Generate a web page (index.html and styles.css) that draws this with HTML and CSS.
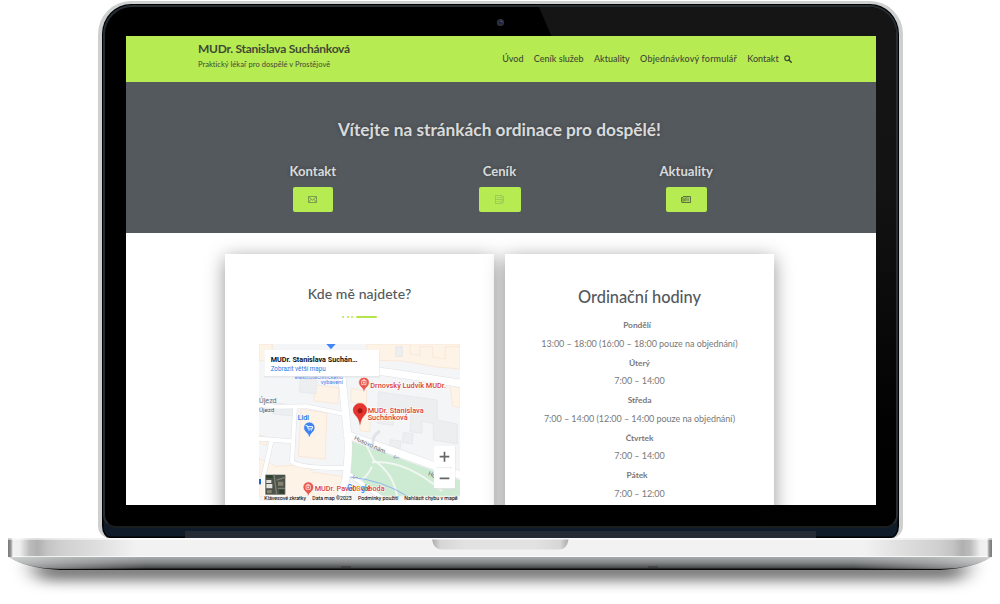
FILE: index.html
```html
<!DOCTYPE html>
<html lang="cs">
<head>
<meta charset="utf-8">
<title>MUDr. Stanislava Suchánková</title>
<link rel="stylesheet" href="styles.css">
</head>
<body>
<div class="laptop">
  <div class="lid">
    <div class="glass">
      <svg class="glare" width="795" height="523" viewBox="0 0 795 523">
        <defs><linearGradient id="gl" x1="0" y1="0" x2="0" y2="1"><stop offset="0" stop-color="#151515"/><stop offset=".35" stop-color="#131313"/><stop offset=".8" stop-color="#020202"/><stop offset="1" stop-color="#000"/></linearGradient></defs>
        <path d="M436 2H765Q793 2 793 30V522H660Z" fill="url(#gl)"/>
        <circle cx="397.500" cy="17.500" r="3.600" fill="#32333a"/><circle cx="397.500" cy="17.500" r="2" fill="#18234c"/><circle cx="398.300" cy="16.500" r=".8" fill="#5266a0"/>
      </svg>
      <div class="screen">
        <header class="header">
          <div class="brand">
            <div class="brand-name"><span class="t">MUDr. Stanislava Suchánková</span></div>
            <div class="brand-sub"><span class="t">Praktický lékař pro dospělé v Prostějově</span></div>
          </div>
          <nav class="nav">
            <a class="t">Úvod</a><a class="t">Ceník služeb</a><a class="t">Aktuality</a><a class="t wide">Objednávkový formulář</a><a class="t">Kontakt</a>
            <svg class="search" width="8" height="8" viewBox="0 0 8 8"><circle cx="3.200" cy="3.200" r="2.400" fill="none" stroke="#3f4a35" stroke-width="1.200"/><path d="M5 5l2.300 2.300" stroke="#3f4a35" stroke-width="1.500" stroke-linecap="round"/></svg>
          </nav>
        </header>
        <section class="hero">
          <h1><span class="t">Vítejte na stránkách ordinace pro dospělé!</span></h1>
          <div class="links">
            <div class="link"><h2><span class="t">Kontakt</span></h2>
              <a class="btn b1"><svg width="9" height="7" viewBox="0 0 9 7"><path d="M.5.5h8v6h-8zM.5.8l4 3.400 4-3.400M.5 6.300l2.700-3M8.500 6.300l-2.700-3" fill="none" stroke="#6d8d4a" stroke-width=".8"/></svg></a></div>
            <div class="link"><h2><span class="t">Ceník</span></h2>
              <a class="btn b2"><svg width="9" height="9" viewBox="0 0 9 9"><path d="M.5.500h6.500v8H.5zM7 1.500h1.500v5.500L7 8.500M1.800 2.500h1.500M4.300 2.500H6M.5 4.500H7M1.800 6.500h1.500M4.300 6.500H6" fill="none" stroke="#96c25a" stroke-width=".8"/></svg></a></div>
            <div class="link"><h2><span class="t">Aktuality</span></h2>
              <a class="btn b3"><svg width="10" height="7" viewBox="0 0 10 7"><path d="M2 .5h7.500v6H1Q.5 6.500.5 5.500v-4H2v4.500" fill="none" stroke="#506645" stroke-width=".9"/><path d="M3.200 2h5M3.200 3h2v1.800h-2zM6.200 3.300h2M6.200 4.800h2" fill="none" stroke="#506645" stroke-width=".7"/></svg></a></div>
          </div>
        </section>
        <main class="cards">
          <section class="card place">
            <h3><span class="t">Kde mě najdete?</span></h3>
            <div class="divider"><i></i><i></i><i></i><b></b></div>
            <svg class="map" width="201" height="157" viewBox="27 27 603 471">
              <rect x="27" y="27" width="603" height="471" fill="#f4f5f7"/>
              <g fill="#fef3e7" stroke="#f8e3d0" stroke-width="2">
                <path d="M350 27h280v75l-70-6-100-18-80-2-28-14z"/>
                <path d="M480 27v30l30 4V35h38v32l38 5V35h44"/>
                <path d="M153 222l78 12-6 138-80-8z"/>
                <path d="M303 160l48 7-2 40-46-6zM330 232l32 5-3 54-29-4z"/>
                <path d="M27 300l30 8-8 22-22-5zM27 370l52 24 90-6 20 24 90 12v60l-130 8-122-8z"/>
                <path d="M195 150l72 8-4 48-72-8zM27 27h40v50H27z"/>
                <path d="M600 150l30 8v60l-22-5z"/>
              </g>
              <g fill="#eceef0" stroke="#e3e5e8" stroke-width="2">
                <path d="M385 170l105 15 72 10v60l60 12v60l-72-12v-50l-34-6v36l-36-5 3-55-50-7-4 43-46-6z"/>
                <path d="M151 130l50 5-3 41-50-5zM72 202l58 9-4 32-58-6zM421 314l32 4-3 29-32-4zM460 292l30 5-3 30-30-5z"/>
                <path d="M437 35h20v30h-20z"/>
              </g>
              <path d="M297 316L630 436V488H400L300 415z" fill="#cdebd2"/>
              <g fill="none" stroke="#dde1e6" stroke-linecap="round" stroke-linejoin="round">
                <path d="M271 80L291 280Q300 335 288 430L270 498M291 299L630 420M330 101Q440 115 630 145" stroke-width="25"/>
                <path d="M27 210l55 5 90-1 115 24M135 216L126 380Q150 400 285 399M27 311l98 8M65 315L38 435M300 420l110 80" stroke-width="15"/>
                <path d="M371 342q-10-36 16-52" stroke-width="9"/>
              </g>
              <g fill="none" stroke="#fff" stroke-linecap="round" stroke-linejoin="round">
                <path d="M271 80L291 280Q300 335 288 430L270 498M291 299L630 420M330 101Q440 115 630 145" stroke-width="22"/>
                <path d="M27 210l55 5 90-1 115 24M135 216L126 380Q150 400 285 399M27 311l98 8M65 315L38 435M300 420l110 80" stroke-width="12"/>
                <path d="M371 342q-10-36 16-52" stroke="#e1e4e8" stroke-width="7"/>
              </g>
              <path d="M345 323l27 53q60 40 70 112M366 395q-14 30-34 40M366 382q100-8 210 86" fill="none" stroke="#eff7f0" stroke-width="6"/>
              <path d="M300 426q100 10 175 60" fill="none" stroke="#92b5ef" stroke-width="3"/>
              <path d="M448 369l-15-3m4-5l-6 5 5 6M324 428l-15-2m5-5l-6 5 5 6" fill="none" stroke="#9cabc2" stroke-width="3"/>
              <path d="M229 27h28l-14 16z" fill="#4285f4"/>
              <rect x="27" y="432" width="6" height="16" fill="#1a67d2"/>
              <g class="map-text">
                <text x="134" y="131" font-size="17" fill="#4a82e8" textLength="145" lengthAdjust="spacingAndGlyphs">elektrotechnického</text>
                <text x="212" y="147" font-size="18" fill="#4a82e8" textLength="67" lengthAdjust="spacingAndGlyphs">vybavení</text>
                <text x="27" y="203" font-size="20" fill="#66717c" textLength="53" lengthAdjust="spacingAndGlyphs">Újezd</text>
                <text x="27" y="232" font-size="17" fill="#50565c" textLength="46" lengthAdjust="spacingAndGlyphs">Újezd</text>
                <text x="143" y="256" font-size="22" fill="#2878ed" stroke="#2878ed" stroke-width=".6" textLength="34" lengthAdjust="spacingAndGlyphs">Lidl</text>
                <text transform="translate(311 313) rotate(25)" font-size="18" fill="#60656b" textLength="106" lengthAdjust="spacingAndGlyphs">Husovo nám.</text>
                <text transform="translate(533 420) rotate(23)" font-size="18" fill="#60656b">Husovo n</text>
                <g class="poi">
                  <text x="361" y="158" font-size="21" textLength="227" lengthAdjust="spacingAndGlyphs">Drnovský Ludvík MUDr.</text>
                  <text x="353" y="234" font-size="21" textLength="168" lengthAdjust="spacingAndGlyphs">MUDr. Stanislava</text>
                  <text x="353" y="256" font-size="21" textLength="120" lengthAdjust="spacingAndGlyphs">Suchánková</text>
                  <text x="194" y="469" font-size="22" textLength="210" lengthAdjust="spacingAndGlyphs">MUDr. Pavel Svoboda</text>
                </g>
              </g>
              <g stroke="#fff" stroke-width="2">
                <path d="M178 309q-3-13-11-18a17 17 0 1 1 22 0q-8 5-11 18z" fill="#3f83ee"/>
                <path d="M342 173q-3-13-10-18a16 16 0 1 1 20 0q-8 5-10 18z" fill="#e9574d"/>
                <path d="M175 486q-3-13-10-17a16 16 0 1 1 20 0q-8 5-10 17z" fill="#e9574d"/>
              </g>
              <path d="M168 272h4l3 10h11l2-7h-14M177 286h.1M185 286h.1" fill="none" stroke="#fff" stroke-width="3" stroke-linecap="round"/>
              <path d="M335 137h13v12h-13zM339 137v-3h5v3M341.500 140v6M338.500 143h6M168 451h13v12h-13zM172 451v-3h5v3M174.500 454v6M171.500 457h6" fill="none" stroke="#fff" stroke-width="2"/>
              <path d="M330 269q-2-17-14-29a20.500 20.500 0 1 1 28 0q-12 12-14 29z" fill="#e6352e" stroke="#c82b25"/><circle cx="330" cy="227" r="7.500" fill="#9f1714"/>
              <g class="google" font-size="28" font-weight="500"><text x="292" y="469" textLength="70" lengthAdjust="spacingAndGlyphs"><tspan fill="#4285f4">G</tspan><tspan fill="#ea4335">o</tspan><tspan fill="#fbbc05">o</tspan><tspan fill="#4285f4">g</tspan><tspan fill="#34a853">l</tspan><tspan fill="#ea4335">e</tspan></text></g>
              <rect x="43" y="46" width="346" height="81" fill="#c7cbd0" opacity=".6"/><rect x="43" y="45" width="345" height="79" fill="#fff"/>
              <g class="map-text">
                <text x="62" y="80" font-size="21" font-weight="700" fill="#111" textLength="260" lengthAdjust="spacingAndGlyphs">MUDr. Stanislava Suchán…</text>
                <text x="62" y="107" font-size="19" fill="#237ae5" textLength="165" lengthAdjust="spacingAndGlyphs">Zobrazit větší mapu</text>
              </g>
              <rect x="43" y="417" width="64" height="64" fill="#fff"/><rect x="46" y="419" width="60" height="60" fill="#4c5149"/>
              <path d="M72 419l8 60M80 435l26-8M83 460h22" stroke="#7b8073" stroke-width="4"/><path d="M49 435h15v9H49zM49 447h18v13H49z" fill="#e3e1dc"/><path d="M84 440h16v12H84zM51 465h14v10H51z" fill="#85836f"/><path d="M88 464h14v12H88zM50 421h18v8H50z" fill="#30402f"/>
              <rect x="552" y="334" width="64" height="129" rx="3" fill="#d8dbde"/><rect x="552" y="333" width="63" height="127" rx="3" fill="#fff"/>
              <path d="M560 398h47" stroke="#e6e6e6" stroke-width="2"/><path d="M569 365h29M583.500 350v30M569 430h29" stroke="#666" stroke-width="5"/>
              <rect x="38" y="482" width="592" height="16" fill="#f5f5f5" opacity=".75"/>
              <g class="map-text" font-size="15" fill="#151515" stroke="#151515" stroke-width=".2">
                <text x="43" y="494" textLength="125" lengthAdjust="spacingAndGlyphs">Klávesové zkratky</text>
                <text x="187" y="494" textLength="118" lengthAdjust="spacingAndGlyphs">Data map ©2023</text>
                <text x="324" y="494" textLength="121" lengthAdjust="spacingAndGlyphs">Podmínky použití</text>
                <text x="463" y="494" textLength="160" lengthAdjust="spacingAndGlyphs">Nahlásit chybu v mapě</text>
              </g>
            </svg>
          </section>
          <section class="card hours">
            <h3><span class="t">Ordinační hodiny</span></h3>
            <p class="day shift"><span class="t">Pondělí</span></p><p><span class="t">13:00 – 18:00 (16:00 – 18:00 pouze na objednání)</span></p>
            <p class="day"><span class="t">Úterý</span></p><p><span class="t">7:00 – 14:00</span></p>
            <p class="day"><span class="t">Středa</span></p><p><span class="t">7:00 – 14:00 (12:00 – 14:00 pouze na objednání)</span></p>
            <p class="day"><span class="t">Čtvrtek</span></p><p><span class="t">7:00 – 14:00</span></p>
            <p class="day shift"><span class="t">Pátek</span></p><p><span class="t">7:00 – 12:00</span></p>
          </section>
        </main>
      </div>
    </div>
    <div class="hinge"></div>
  </div>
  <svg class="base" width="1000" height="66" viewBox="0 538 1000 66">
    <defs>
      <linearGradient id="top"><stop offset="0" stop-color="#777"/><stop offset=".003" stop-color="#999"/><stop offset=".005" stop-color="#f2f2f2"/><stop offset=".012" stop-color="#eee"/><stop offset=".022" stop-color="#bcbcbc"/><stop offset=".03" stop-color="#b0b0b0"/><stop offset=".04" stop-color="#c4c4c4"/><stop offset=".055" stop-color="#d0d0d0"/><stop offset=".09" stop-color="#dedede"/><stop offset=".13" stop-color="#f2f2f2"/><stop offset=".87" stop-color="#f2f2f2"/><stop offset=".91" stop-color="#dedede"/><stop offset=".945" stop-color="#d0d0d0"/><stop offset=".96" stop-color="#c4c4c4"/><stop offset=".97" stop-color="#b0b0b0"/><stop offset=".978" stop-color="#bcbcbc"/><stop offset=".988" stop-color="#eee"/><stop offset=".995" stop-color="#f2f2f2"/><stop offset=".997" stop-color="#999"/><stop offset="1" stop-color="#777"/></linearGradient>
      <linearGradient id="under" x1="0" y1="0" x2="0" y2="1"><stop offset="0" stop-color="#a9acad"/><stop offset=".45" stop-color="#808485"/><stop offset=".8" stop-color="#4d5051"/><stop offset=".92" stop-color="#151515"/><stop offset="1" stop-color="#000"/></linearGradient>
      <linearGradient id="edge"><stop offset="0" stop-color="#eee"/><stop offset=".06" stop-color="#ccc" stop-opacity=".7"/><stop offset=".14" stop-color="#ccc" stop-opacity="0"/><stop offset=".86" stop-color="#ccc" stop-opacity="0"/><stop offset=".94" stop-color="#ccc" stop-opacity=".7"/><stop offset="1" stop-color="#eee"/></linearGradient>
      <linearGradient id="notch"><stop offset="0" stop-color="#aaa"/><stop offset=".06" stop-color="#d6d6d6"/><stop offset=".25" stop-color="#e2e2e2"/><stop offset=".75" stop-color="#e2e2e2"/><stop offset=".94" stop-color="#d6d6d6"/><stop offset="1" stop-color="#aaa"/></linearGradient>
      <filter id="soft" x="-10%" y="-200%" width="120%" height="500%"><feGaussianBlur stdDeviation="11 7"/></filter>
    </defs>
    <path d="M30 562H970L960 580H40Z" fill="#000" opacity=".58" filter="url(#soft)"/>
    <path d="M0 538H1000V557H0Z" fill="#fff"/>
    <path d="M9 557H991Q975 568 940 570H60Q25 568 9 557Z" fill="url(#under)"/>
    <path d="M9 557H991Q975 568 940 569H60Q25 568 9 557Z" fill="url(#edge)" opacity=".6"/>
    <rect x="8" y="538.500" width="984" height="18.500" fill="url(#top)"/>
    <path d="M8 539.200H992M12 556.500H988" stroke="#fff" stroke-width="1" opacity=".75"/>
    <path d="M432 539.500H568.500Q567 549.500 559 549.500H442Q433.500 549.500 432 539.500Z" fill="url(#notch)"/>
    <path d="M341 567h10M648 567h10" stroke="#333" stroke-width="1"/>
  </svg>
</div>
</body>
</html>
```

FILE: styles.css
```css
* { box-sizing: border-box; }
body { margin: 0; background: #fff; font-family: Lato, "Open Sans", sans-serif; }
h1, h2, h3, p { margin: 0; }
.t { white-space: nowrap; }
.laptop { width: 1000px; height: 604px; overflow: hidden; padding-top: 1px; }
.lid { width: 805px; height: 537px; margin: 0 auto 0 98px; padding: 1px 1px 0; border-radius: 33px 33px 12px 12px; background: #0f1b28; border: solid #cdd0ce; border-width: 3px 4px 0; box-shadow: inset 0 0 0 1.5px #000; }
.glass { position: relative; width: 795px; height: 523px; border-radius: 29px 29px 13px 13px; background: #000; border: 2px solid #282d33; border-bottom-color: #1b1e1f; overflow: hidden; }
.hinge { height: 7px; margin: 3px 82px 0; background: #252b35; }
.base { display: block; }
.glare { position: absolute; left: -2px; top: -2px; }
.screen { position: relative; width: 750px; height: 469px; margin: 29px 0 0 21px; background: #fff; overflow: hidden; }
.header { height: 46px; background: #b7eb52; display: flex; justify-content: space-between; padding: 0 84px 0 72px; color: #3f4a35; }
.brand { padding-top: 4px; }
.brand-name { font-size: 12px; line-height: 17px; font-weight: 700; letter-spacing: -.26px; }
.brand-sub { font-size: 7.5px; line-height: 16px; letter-spacing: .04px; }
.nav { display: flex; align-items: center; font-size: 9px; gap: 10.300px; font-weight: 500; padding-bottom: 1px; }
.nav .wide { letter-spacing: .19px; }
.search { margin-left: -5px; }
.hero { height: 151px; background: #54595d; color: #d9dad9; text-align: center; padding: 36px 3px 0 0; text-shadow: 0 0 4px rgba(0,0,0,.3); }
.hero h1 { font-size: 17.300px; line-height: 24px; font-weight: 700; }
.links { display: flex; width: 560px; margin: 17px auto 0; }
.link { width: 186.700px; display: flex; flex-direction: column; align-items: center; }
.link h2 { font-size: 13.100px; line-height: 24px; font-weight: 700; }
.btn { display: flex; align-items: center; justify-content: center; width: 41px; height: 25px; background: #b7eb52; border-radius: 2px; margin-top: 4px; }
.b1 { width: 40px; }
.b2 { width: 42px; }
.cards { display: flex; gap: 11px; padding: 21px 0 0 99px; }
.card { width: 269px; height: 300px; background: #fff; box-shadow: 0 4px 18px rgba(0,0,0,.42); color: #54595d; text-align: center; }
.place { padding-top: 29px; }
.place h3 { font-size: 14px; line-height: 22px; font-weight: 500; letter-spacing: .1px; }
.divider { display: flex; justify-content: center; gap: 2.500px; margin-top: 11px; height: 2px; }
.divider i { width: 2px; background: #b4e64b; border-radius: 1px; }
.divider b { width: 21px; background: #b4e64b; border-radius: 1px; }
.map { display: block; margin: 26px 0 0 34px; }
.map-text, .google { font-family: Roboto, sans-serif; }
.poi { fill: #d93e3b; font-weight: 500; stroke: #fff; stroke-width: 3px; paint-order: stroke; }
.hours { padding-top: 32px; font-size: 9px; color: #77797b; letter-spacing: -.05px; }
.hours h3 { color: #54595d; font-size: 16.400px; line-height: 22px; font-weight: 500; margin-bottom: 8px; }
.hours p { line-height: 18.750px; }
.hours .day { font-weight: 700; font-size: 8.400px; }
.hours .shift { padding-right: 5px; }
```
